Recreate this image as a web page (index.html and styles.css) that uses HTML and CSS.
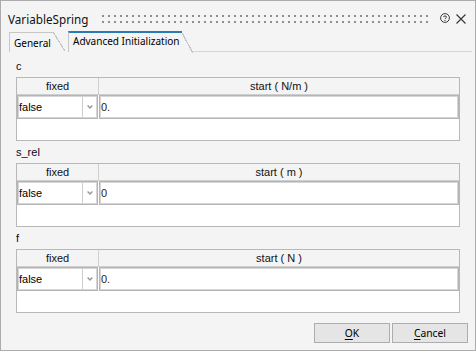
FILE: index.html
```html
<!DOCTYPE html>
<html>
<head>
<meta charset="utf-8">
<link rel="stylesheet" href="styles.css">
</head>
<body>
<div class="window">
  <div class="titlebar">
    <span class="title">VariableSpring</span>
    <div class="grip"></div>
    <svg class="help" width="10" height="10" viewBox="0 0 10 10">
      <circle cx="5" cy="5" r="4.4" fill="none" stroke="#3a3a3a" stroke-width="1"/>
      <path d="M3.5 4 C3.5 2.6 6.5 2.6 6.5 4 C6.5 5 5 5 5 6.1" fill="none" stroke="#3a3a3a" stroke-width="1"/>
      <rect x="4.5" y="7" width="1" height="1" fill="#3a3a3a"/>
    </svg>
    <svg class="close" width="11" height="10" viewBox="0 0 11 10">
      <path d="M0.5 0.5 L9.5 9.5 M9.5 0.5 L0.5 9.5" fill="none" stroke="#333" stroke-width="1.1"/>
    </svg>
  </div>
  <div class="tabs">
    <div class="tab">General</div>
    <div class="tab active">Advanced Initialization</div>
    <div class="tabfill"></div>
  </div>
  <div class="content">
    <section class="group">
      <div class="label">c</div>
      <div class="grid">
        <div class="head">
          <div class="hcell hfixed">fixed</div>
          <div class="hcell hstart">start ( N/m )</div>
        </div>
        <div class="row">
          <div class="combo">
            <span class="val">false</span>
            <span class="drop"><svg width="6" height="4" viewBox="0 0 6 4"><path d="M0.6 0.6 L3 3 L5.4 0.6" fill="none" stroke="#969696" stroke-width="1.4"/></svg></span>
          </div>
          <div class="edit">0.</div>
        </div>
      </div>
    </section>
    <section class="group">
      <div class="label">s_rel</div>
      <div class="grid">
        <div class="head">
          <div class="hcell hfixed">fixed</div>
          <div class="hcell hstart">start ( m )</div>
        </div>
        <div class="row">
          <div class="combo">
            <span class="val">false</span>
            <span class="drop"><svg width="6" height="4" viewBox="0 0 6 4"><path d="M0.6 0.6 L3 3 L5.4 0.6" fill="none" stroke="#969696" stroke-width="1.4"/></svg></span>
          </div>
          <div class="edit">0</div>
        </div>
      </div>
    </section>
    <section class="group">
      <div class="label">f</div>
      <div class="grid">
        <div class="head">
          <div class="hcell hfixed">fixed</div>
          <div class="hcell hstart">start ( N )</div>
        </div>
        <div class="row">
          <div class="combo">
            <span class="val">false</span>
            <span class="drop"><svg width="6" height="4" viewBox="0 0 6 4"><path d="M0.6 0.6 L3 3 L5.4 0.6" fill="none" stroke="#969696" stroke-width="1.4"/></svg></span>
          </div>
          <div class="edit">0.</div>
        </div>
      </div>
    </section>
  </div>
  <div class="buttons">
    <button class="btn"><u>O</u>K</button>
    <button class="btn"><u>C</u>ancel</button>
  </div>
</div>
</body>
</html>
```
FILE: styles.css
```css
html, body {
  margin: 0;
  padding: 0;
  background: #f4f4f4;
}
.window {
  width: 476px;
  height: 351px;
  box-sizing: border-box;
  border: 1px solid #acacac;
  background: #f4f4f4;
  display: flex;
  flex-direction: column;
  font-family: "Noto Sans", "Liberation Sans", sans-serif;
  color: #000;
}
.titlebar {
  height: 30px;
  box-sizing: border-box;
  padding: 10px 8px 0 7px;
  display: flex;
  align-items: flex-start;
}
.title {
  font-size: 11.7px;
  line-height: 16px;
  color: #111;
  flex: none;
}
.grip {
  flex: 1;
  height: 8px;
  margin: 4px 10px 0 14px;
  background:
    linear-gradient(to bottom, transparent 2px, #f4f4f4 2px) 0 0 / 6px 6px,
    linear-gradient(to right, #8e8e8e 2px, transparent 2px) 0 0 / 6px 6px;
}
.help {
  flex: none;
  margin-top: 2px;
}
.close {
  flex: none;
  margin: 3px 0 0 6px;
}
.tabs {
  height: 21px;
  display: flex;
  align-items: flex-start;
  padding-left: 8px;
}
.tab {
  position: relative;
  box-sizing: content-box;
  margin-top: 1px;
  height: 17px;
  width: 39px;
  padding: 2px 0 0 4px;
  border-left: 1px solid #c6c6c6;
  border-top: 1px solid #c6c6c6;
  font-size: 10px;
  line-height: 16px;
  margin-right: 15px;
  white-space: nowrap;
}
.tab::after {
  content: "";
  position: absolute;
  left: 100%;
  top: -1px;
  width: 12px;
  height: 19px;
  background: linear-gradient(to top right, transparent calc(50% - 0.6px), #c6c6c6 calc(50% - 0.6px), #c6c6c6 calc(50% + 0.6px), transparent calc(50% + 0.6px));
}
.tab.active {
  margin-top: 0;
  height: 19px;
  width: 109px;
  padding-top: 0;
  border-top: 2px solid #2a7ab4;
  margin-right: 11px;
}
.tab.active::after {
  top: 0;
  width: 11px;
  height: 20px;
}
.tabfill {
  flex: 1;
  height: 20px;
  border-bottom: 1px solid #d6d6d6;
  margin-right: 3px;
}
.content {
  flex: 1;
  padding: 8px 15px 0 15px;
  display: flex;
  flex-direction: column;
  gap: 5px;
}
.label {
  font-family: "Liberation Sans", sans-serif;
  font-size: 11px;
  line-height: 13px;
  margin-bottom: 4px;
  color: #0a0a20;
}
.grid {
  height: 64px;
  box-sizing: border-box;
  border: 1px solid #b8b8b8;
  background: #fff;
  font-family: "Liberation Sans", sans-serif;
  font-size: 11px;
}
.head {
  display: flex;
  height: 16px;
  border-bottom: 1px solid #cfcfcf;
  background: #f4f4f4;
}
.hcell {
  line-height: 16px;
  text-align: center;
  color: #111;
}
.hfixed {
  width: 81px;
  border-right: 1px solid #d0d0d0;
}
.hstart {
  flex: 1;
}
.row {
  display: flex;
  height: 24px;
  gap: 1px;
}
.combo, .edit {
  box-sizing: border-box;
  height: 24px;
  border: 1px solid #b4b4b4;
  box-shadow: inset 0 0 0 1px #d6d6d6;
  line-height: 20px;
  padding: 1px;
}
.combo {
  width: 81px;
  display: flex;
}
.val {
  flex: 1;
  color: #000;
}
.drop {
  width: 13px;
  border-left: 1px solid #cdcdcd;
  display: flex;
  align-items: center;
  justify-content: center;
  padding-left: 0;
}
.edit {
  flex: 1;
  color: #2a1c05;
}
.buttons {
  display: flex;
  justify-content: flex-end;
  gap: 2px;
  padding: 0 7px 7px 0;
}
.btn {
  width: 76px;
  height: 20px;
  box-sizing: border-box;
  margin: 0;
  padding: 0;
  border: 1px solid #adadad;
  background: #e5e5e5;
  font-family: "Noto Sans", "Liberation Sans", sans-serif;
  font-size: 10.3px;
  line-height: 18px;
  color: #000;
}
.btn u {
  text-decoration-thickness: 1px;
  text-underline-offset: 1.5px;
}
```
